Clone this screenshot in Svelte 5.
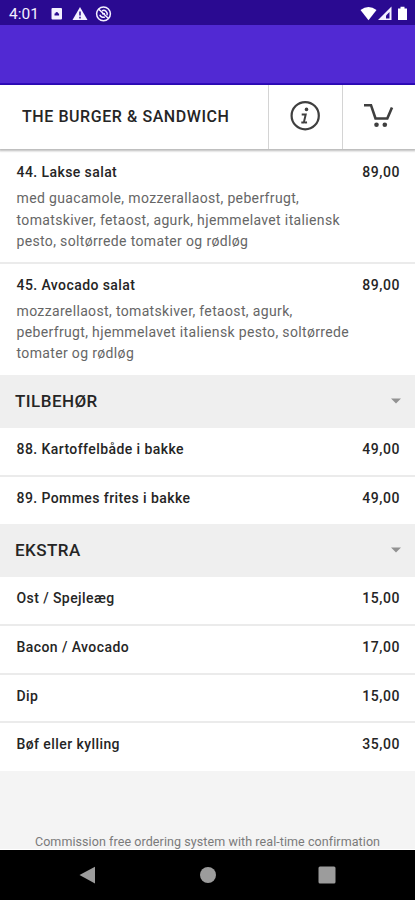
<script lang="ts">
  type Dish = { name: string; price: string; text?: string[] };
  type Section = { title: string; dishes: Dish[] };

  const salads: Dish[] = [
    {
      name: "44. Lakse salat",
      price: "89,00",
      text: [
        "med guacamole, mozzerallaost, peberfrugt,",
        "tomatskiver, fetaost, agurk, hjemmelavet italiensk",
        "pesto, soltørrede tomater og rødløg",
      ],
    },
    {
      name: "45. Avocado salat",
      price: "89,00",
      text: [
        "mozzarellaost, tomatskiver, fetaost, agurk,",
        "peberfrugt, hjemmelavet italiensk pesto, soltørrede",
        "tomater og rødløg",
      ],
    },
  ];

  let sections: Section[] = [
    {
      title: "TILBEHØR",
      dishes: [
        { name: "88. Kartoffelbåde i bakke", price: "49,00" },
        { name: "89. Pommes frites i bakke", price: "49,00" },
      ],
    },
    {
      title: "EKSTRA",
      dishes: [
        { name: "Ost / Spejleæg", price: "15,00" },
        { name: "Bacon / Avocado", price: "17,00" },
        { name: "Dip", price: "15,00" },
        { name: "Bøf eller kylling", price: "35,00" },
      ],
    },
  ];
</script>

{#snippet dishRow(dish: Dish)}
  <li class="dish" class:tall={dish.text}>
    <div class="line">
      <span class="name">{dish.name}</span>
      <span class="price">{dish.price}</span>
    </div>
    {#if dish.text}
      <p>
        {#each dish.text as row}
          <span>{row}</span>
        {/each}
      </p>
    {/if}
  </li>
{/snippet}

<div class="phone">
  <div class="status">
    <span class="clock">4:01</span>
    <svg class="left-icons" width="64" height="18" viewBox="0 0 64 18">
      <rect x="2.500" y="3" width="10.500" height="11.500" rx="1" fill="#f4f0ff" />
      <path d="M5.500 10.500V8.500h.8a1.500 1.500 0 0 1 3 0h.8v2z" fill="#2a0a91" />
      <path d="M31 2 38.500 15h-15z" fill="#f4f0ff" />
      <path d="M31 6.500v4M31 11.800v1.800" stroke="#2a0a91" stroke-width="1.500" />
      <g fill="none" stroke="#f4f0ff" stroke-width="1.500">
        <circle cx="54.500" cy="8.800" r="6.900" />
        <path d="M49.500 4 59.500 13.500M50.800 9.800a3.600 3.600 0 0 0 5 2.200M53 5.800a3.600 3.600 0 0 1 5 4.500M53 8.800h3" />
      </g>
    </svg>
    <svg class="right-icons" width="50" height="18" viewBox="0 0 50 18">
      <path d="M2.500 5Q10.500-.8 18.500 5L10.500 15.300z" fill="#fff" />
      <path d="M33.500 1.500V15H20z" fill="#f4f0ff" />
      <path d="M31.500 7v6.500h-3.500v-3z" fill="#2a0a91" />
      <path d="M40 3.500h2.500V1.800h4v1.700H49V15h-9z" fill="#fff" />
    </svg>
  </div>
  <div class="appbar"></div>

  <header>
    <h1>THE BURGER &amp; SANDWICH</h1>
    <button aria-label="Info">
      <svg width="32" height="32" viewBox="0 0 32 32" fill="none" stroke="#3f3f3f">
        <circle cx="15.200" cy="15.700" r="13.600" stroke-width="2.200" />
        <circle cx="16.500" cy="9.400" r="1.800" fill="#3f3f3f" stroke="none" />
        <path d="M11.700 14.400h4l-1.600 7q-.3 1.500 2.900.8M11.300 22.500h3" stroke-width="2" />
      </svg>
    </button>
    <button class="cart" aria-label="Cart">
      <svg width="32" height="32" viewBox="0 0 32 32" fill="none" stroke="#3f3f3f">
        <path d="M1 5.200h7l4.500 13.300h11.800L29 7.500" stroke-width="2.600" />
        <circle cx="13.500" cy="24.800" r="2.300" fill="#3f3f3f" stroke="none" />
        <circle cx="21.800" cy="24.800" r="2.300" fill="#3f3f3f" stroke="none" />
      </svg>
    </button>
  </header>

  <main>
    <ul class="first">
      {#each salads as dish}
        {@render dishRow(dish)}
      {/each}
    </ul>
    {#each sections as section}
      <h2>
        {section.title}
        <svg width="10" height="6" viewBox="0 0 10 6"><path d="M0 .5h10L5 5.500z" fill="#929292" /></svg>
      </h2>
      <ul>
        {#each section.dishes as dish}
          {@render dishRow(dish)}
        {/each}
      </ul>
    {/each}
    <footer>Commission free ordering system with real-time confirmation</footer>
  </main>

  <nav>
    <svg width="18" height="18" viewBox="0 0 18 18"><path d="M.5 9 16 .8v16.600z" fill="#9c9c9c" /></svg>
    <svg width="18" height="18" viewBox="0 0 18 18"><circle cx="9" cy="9" r="8" fill="#9c9c9c" /></svg>
    <svg width="18" height="18" viewBox="0 0 18 18"><rect x=".5" y=".5" width="17" height="17" rx="1.500" fill="#9c9c9c" /></svg>
  </nav>
</div>

<style>
  :global(body) {
    background: #fff;
  }
  .phone {
    width: 415px;
    height: 900px;
    display: flex;
    flex-direction: column;
    overflow: hidden;
    font-family: Roboto, "Liberation Sans", sans-serif;
    color: #252525;
  }
  .status {
    height: 25px;
    flex: none;
    display: flex;
    align-items: center;
    padding: 2px 7px 0 9px;
    box-sizing: border-box;
    background: #2a0a91;
  }
  .clock {
    color: #f4f0ff;
    font-size: 15.5px;
    width: 40px;
  }
  .left-icons {
    margin-right: auto;
  }
  .appbar {
    height: 60px;
    flex: none;
    box-sizing: border-box;
    background: #5129d3;
    border-bottom: 2px solid #2f0bc0;
  }
  header {
    position: relative;
    height: 64px;
    flex: none;
    display: flex;
    background: #fff;
    box-shadow: 0 1px 2px 1px rgba(0, 0, 0, 0.27);
  }
  h1 {
    flex: 1;
    margin: 0;
    padding-left: 22px;
    font-size: 16px;
    font-weight: 500;
    line-height: 64px;
    letter-spacing: 0.57px;
    white-space: nowrap;
  }
  button {
    width: 74px;
    padding: 0 0 2px;
    display: flex;
    align-items: center;
    justify-content: center;
    border: none;
    border-left: 1px solid #d4d4d4;
    background: none;
  }
  .cart {
    width: 73px;
  }
  main {
    flex: 1;
    display: flex;
    flex-direction: column;
    background: #f4f4f4;
    border-bottom: 1px solid #fff;
  }
  ul {
    margin: 0;
    padding: 0;
    list-style: none;
    background: #fff;
  }
  .first {
    padding-top: 2px;
  }
  .dish {
    height: 48.67px;
    box-sizing: border-box;
    padding: 12px 15px 0 16.5px;
    border-bottom: 2px solid #ebebeb;
  }
  .dish.tall {
    height: 112.5px;
  }
  .dish:last-child {
    border-bottom: none;
    height: 47.8px;
  }
  .dish.tall:last-child {
    height: 111.5px;
  }
  .line {
    display: flex;
    justify-content: space-between;
    font-size: 14px;
    font-weight: 500;
    line-height: 19px;
    letter-spacing: 0.42px;
  }
  .price {
    letter-spacing: 0.55px;
  }
  .dish p {
    margin: 6.3px 0 0;
    font-size: 14px;
    line-height: 21.2px;
    color: #666;
    letter-spacing: 0.35px;
  }
  .dish p span {
    display: block;
    white-space: nowrap;
  }
  h2 {
    height: 53px;
    margin: 0;
    padding: 0 14px 1.4px 15px;
    box-sizing: border-box;
    display: flex;
    align-items: center;
    justify-content: space-between;
    font-size: 17px;
    font-weight: 500;
    letter-spacing: 0.45px;
    background: #efefef;
  }
  footer {
    margin-top: auto;
    height: 16px;
    line-height: 17px;
    text-align: center;
    font-size: 12.5px;
    letter-spacing: 0.08px;
    color: #7a7a7a;
    white-space: nowrap;
  }
  nav {
    height: 50px;
    flex: none;
    box-sizing: border-box;
    padding: 0 79px;
    display: flex;
    align-items: center;
    justify-content: space-between;
    background: #000;
  }
</style>
